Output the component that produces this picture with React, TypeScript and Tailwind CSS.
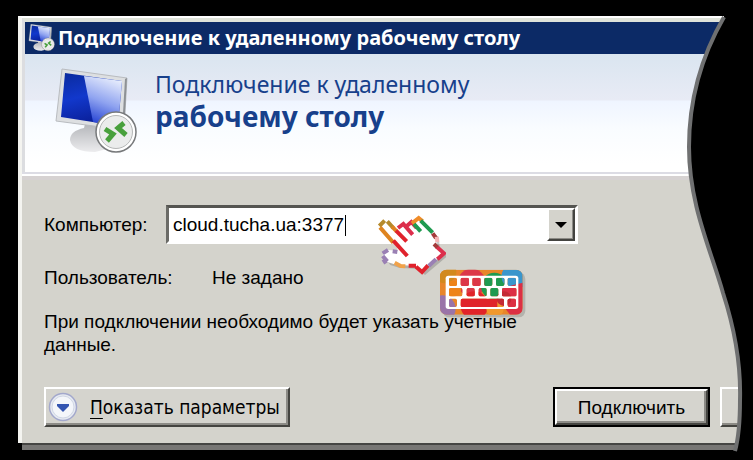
import type { ReactNode } from "react";
import { clsx } from "clsx";

const handStrokes = [
  { color: "#b58a2c", d: "M10 42 26 26M34 28 52 48" },
  { color: "#de8420", d: "M12 46 52 92M48 44 62 58" },
  { color: "#e0222c", d: "M52 86 94 132M60 56 92 88M120 161H98M156 160 138 180 120 164" },
  { color: "#dc2f4c", d: "M66 48 82 36 110 68M90 44 106 30 122 48M182 104 204 124 184 142" },
  { color: "#f08c28", d: "M108 34 128 18 140 28" },
  { color: "#1f9a50", d: "M114 36 134 58M134 26 170 62" },
  { color: "#a33a3a", d: "M170 64 180 78M174 96 184 106" },
  { color: "#f3b5b5", d: "M182 74 184 90" },
  { color: "#9a80b4", d: "M20 124 36 114M50 118 64 120M20 132 34 148M180 142 158 162M22 142 30 154" },
  { color: "#f0a24a", d: "M88 163 74 162 56 152" },
];

const keys = [
  [42, 47, 24], [77, 47, 25], [112, 47, 25], [148, 47, 24], [183, 47, 25], [218, 47, 25],
  [42, 78, 40], [95, 78, 24], [131, 78, 24], [166, 78, 24], [201, 78, 44],
  [42, 110, 24], [77, 110, 130], [218, 110, 25],
];

function ComputerIcon({ className }: { className?: string }) {
  return (
    <svg viewBox="0 0 84 88" className={className} aria-hidden="true">
      <defs>
        <linearGradient id="screen" x1="0" y1="0" x2="0.3" y2="1">
          <stop offset="0" stopColor="#0a2a9c" />
          <stop offset="0.5" stopColor="#1238cc" />
          <stop offset="1" stopColor="#0a1f98" />
        </linearGradient>
        <linearGradient id="glare" x1="0.6" y1="0" x2="0.3" y2="1">
          <stop offset="0" stopColor="#e6ecfc" />
          <stop offset="0.5" stopColor="#8fa3f0" />
          <stop offset="1" stopColor="#1c3ad0" />
        </linearGradient>
        <linearGradient id="stand" x1="0" y1="0" x2="0" y2="1">
          <stop offset="0" stopColor="#b4b6ba" />
          <stop offset="1" stopColor="#ececee" />
        </linearGradient>
      </defs>
      <path d="M30 56 29 60Q15 63 15 72 17 84 40 84L56 80 56 60Z" fill="url(#stand)" />
      <path d="M7 1 72 10 69 62 1 53Z" fill="#dddfe1" stroke="#b9bcc0" strokeWidth="1" />
      <path d="M72 10 69 62 67 62 70 11Z" fill="#8d9195" />
      <path d="M10 5 67 13 63 58 6 49Z" fill="url(#screen)" />
      <path d="M29 8 67 13 63 58 38 54Z" fill="url(#glare)" />
      <circle cx="61" cy="64" r="20" fill="#fff" stroke="#77797b" strokeWidth="1.5" />
      <circle cx="61" cy="64" r="16.5" fill="#ebecec" stroke="#b5b7b7" strokeWidth="1" />
      <path d="M50 61 58 66 52 73M69 55 63 60 71 67" fill="none" stroke="#48a03c" strokeWidth="5" />
    </svg>
  );
}

function HandIcon({ className }: { className?: string }) {
  const outline =
    "M12 40 26 26 38 32 60 54 82 36 92 44 106 30 114 32 128 18 180 68 182 98 204 124 138 180 120 162 60 158 34 150 20 132 22 122 36 114 66 116 62 104 14 52Z";
  return (
    <svg viewBox="0 0 210 198" className={className} aria-hidden="true">
      <path d={outline} transform="translate(9 9)" fill="#6b6b68" opacity="0.35" />
      <path d={outline} fill="#fff" />
      {handStrokes.map((s) => (
        <path key={s.color} d={s.d} fill="none" stroke={s.color} strokeWidth="12" />
      ))}
    </svg>
  );
}

function Blobs() {
  return (
    <>
      <rect x="15" y="23" width="248" height="135" fill="#e8862a" />
      <circle cx="30" cy="30" r="34" fill="#d28a1e" />
      <circle cx="22" cy="140" r="40" fill="#9a74a8" />
      <circle cx="110" cy="62" r="42" fill="#dc3848" />
      <circle cx="178" cy="72" r="40" fill="#1f9a50" />
      <path d="M205 23H263V75H215Q190 50 205 23Z" fill="#3a96cc" />
      <path d="M200 78 263 62V158H225L196 120Z" fill="#dc3044" />
      <circle cx="118" cy="130" r="42" fill="#e0242a" />
      <circle cx="180" cy="140" r="26" fill="#f0982e" />
      <circle cx="207" cy="110" r="22" fill="#c42a34" />
      <circle cx="55" cy="80" r="24" fill="#ee8418" />
      <rect x="77" y="110" width="110" height="25" fill="#e0242a" />
    </>
  );
}

function KeyboardIcon({ className }: { className?: string }) {
  return (
    <svg viewBox="0 0 285 195" className={className} aria-hidden="true">
      <defs>
        <clipPath id="case">
          <rect x="15" y="23" width="248" height="135" rx="20" />
        </clipPath>
        <clipPath id="keys">
          {keys.map(([x, y, w]) => (
            <rect key={`${x}-${y}`} x={x} y={y} width={w} height="25" rx="5" />
          ))}
        </clipPath>
      </defs>
      <rect x="23" y="31" width="248" height="135" rx="20" fill="#6b6b68" opacity="0.3" />
      <g clipPath="url(#case)">
        <Blobs />
      </g>
      <rect x="32" y="41" width="218" height="100" rx="8" fill="#fff" />
      <g clipPath="url(#keys)">
        <Blobs />
      </g>
    </svg>
  );
}

// torn right-hand edge of the window
function TornEdge() {
  const edge = "M51 17C32 50 16 95 16 147 16 205 38 250 50 293 62 330 68 365 67 400 67 425 65 440 62 451";
  return (
    <svg viewBox="0 0 80 460" className="absolute right-0 top-0 h-[460px] w-20" aria-hidden="true">
      <path d={`${edge}V460H80V0H51Z`} fill="#000" />
      <path d={edge} fill="none" stroke="#6f7071" strokeWidth="4" />
    </svg>
  );
}

function DialogButton({ className, children }: { className?: string; children?: ReactNode }) {
  return (
    <button
      type="button"
      className={clsx(
        "flex shrink-0 items-center border-2 border-t-white border-l-white border-r-[#444440] border-b-[#444440] bg-[#d5d4ce] text-black shadow-[inset_-2px_-2px_0_#8c8b86]",
        className,
      )}
    >
      {children}
    </button>
  );
}

export default function App() {
  return (
    <main className="relative min-h-screen overflow-hidden bg-black pt-4 pl-[18px]">
      <div className="border-t-2 border-l-4 border-t-white border-l-[#f4f4f0] bg-[#d4d3cc]">
        <div className="border-t-4 border-l-[3px] border-t-[#dfe3da] border-l-[#dcdde0]">
          <header className="flex h-8 items-center gap-[2px] bg-[#0c2a66] pl-[3px]">
            <ComputerIcon className="h-7 w-7" />
            <h1 className="whitespace-nowrap font-['Noto_Sans',sans-serif] text-[20px] leading-8 font-bold text-white">
              Подключение к удаленному рабочему столу
            </h1>
          </header>

          <section className="flex h-[118px] gap-4 bg-[linear-gradient(#dae5f0_0,#e8ebf5_46px,#eff5ff_47px,#f9fcff_75px,#ffffff_110px)] pt-[14px] pl-[30px]">
            <ComputerIcon className="h-[88px] w-[84px]" />
            <h2 className="font-['Noto_Sans',sans-serif] text-[23px] leading-8 text-[#17408b]">
              Подключение к удаленному
              <strong className="block text-[28px] leading-8 font-bold">рабочему столу</strong>
            </h2>
          </section>
        </div>
        <div className="h-2 border-t-2 border-b-4 border-t-[#dcdce4] border-b-[#d6d2d2] bg-white" />

        <form className="pt-[25px] pb-4 pl-[22px] font-['Liberation_Sans',Arial,sans-serif] text-[19px] leading-[23px] text-black">
          <div className="flex items-center">
            <label htmlFor="computer" className="w-[122px]">
              Компьютер:
            </label>
            <div className="relative">
              <div className="flex h-[39px] w-[412px] border-[3px] border-t-[#555551] border-r-white border-b-white border-l-[#6b6b67] bg-white">
                <input
                  id="computer"
                  type="text"
                  defaultValue="cloud.tucha.ua:3377"
                  className="min-w-0 flex-1 bg-transparent pl-1 outline-none"
                />
                <button
                  type="button"
                  aria-label="Список компьютеров"
                  className="flex w-7 items-center justify-center border-2 border-t-white border-l-white border-r-[#444440] border-b-[#444440] bg-[#d4d3cc] shadow-[inset_-1px_-1px_0_#8c8b86]"
                >
                  <svg viewBox="0 0 12 6" className="h-[6px] w-3">
                    <path d="M0 0H12L6 6Z" fill="#000" />
                  </svg>
                </button>
              </div>
              <span className="absolute top-[10px] left-[179px] h-[21px] w-px bg-black" />
              <HandIcon className="absolute top-[7px] left-[210px] h-[66px] w-[70px]" />
              <KeyboardIcon className="absolute top-[57px] left-[269px] h-[65px] w-[95px]" />
            </div>
          </div>

          <dl className="mt-[21px] flex h-6 items-center">
            <dt className="w-[168px]">Пользователь:</dt>
            <dd>Не задано</dd>
          </dl>

          <p className="relative mt-[21px] max-w-[500px]">
            При подключении необходимо будет указать учетные данные.
          </p>

          <div className="mt-[31px] flex">
            <DialogButton className="h-10 w-[246px] gap-3 pl-[2px] font-['DejaVu_Sans_Condensed','DejaVu_Sans',sans-serif]">
              <svg viewBox="0 0 30 30" className="h-[30px] w-[30px]" aria-hidden="true">
                <circle cx="15" cy="15" r="13.5" fill="#e6eaf1" stroke="#a3a8cc" strokeWidth="1.5" />
                <circle cx="15" cy="15" r="11" fill="#f4f6fa" stroke="#d0d6e4" strokeWidth="1" />
                <path d="M9 12H21V14L15 20 9 14Z" fill="#3355b0" />
              </svg>
              <span>
                <span className="underline underline-offset-4">П</span>оказать параметры
              </span>
            </DialogButton>
            <div className="ml-[263px] flex gap-[10px]">
              <div className="border-2 border-black">
                <DialogButton className="h-9 w-[153px] justify-center">Подключить</DialogButton>
              </div>
              <DialogButton className="h-10 w-20" />
            </div>
          </div>
        </form>
      </div>
      <div className="ml-1 h-[7px] border-t-2 border-t-[#454543] bg-[#777674]" />
      <TornEdge />
    </main>
  );
}
